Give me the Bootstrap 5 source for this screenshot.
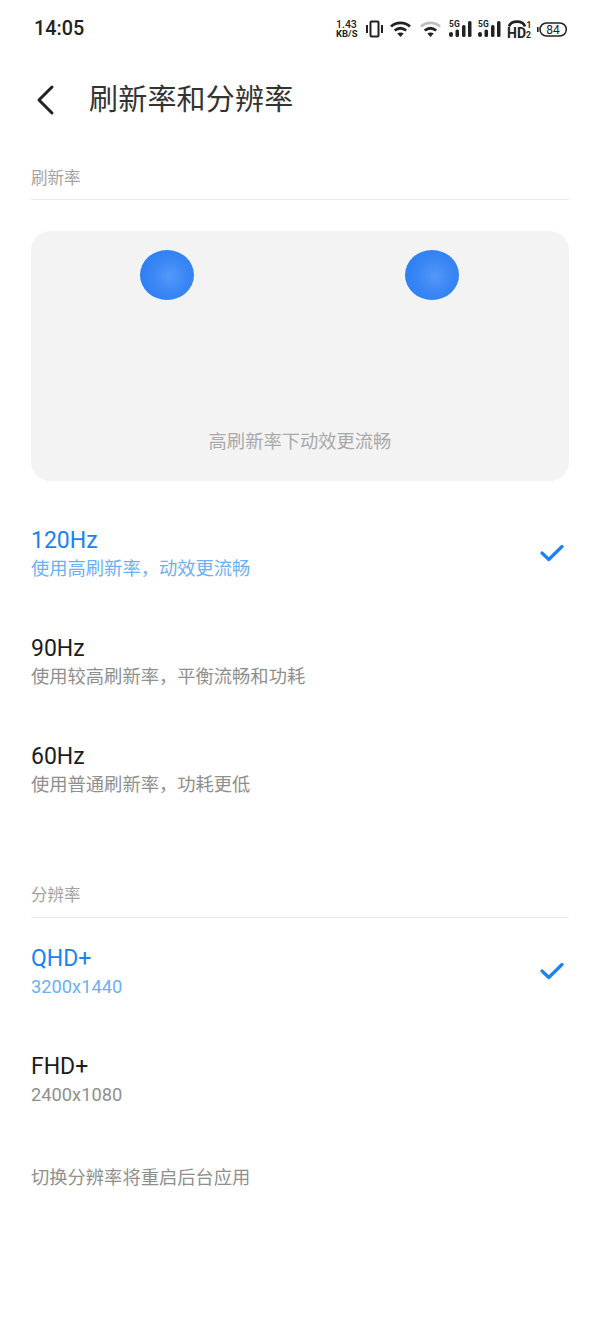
<!DOCTYPE html>
<html lang="zh">
<head>
    <meta charset="UTF-8">
    <title>刷新率和分辨率</title>
    <link href="https://cdn.jsdelivr.net/npm/bootstrap@5.3.0/dist/css/bootstrap.min.css" rel="stylesheet">
    <style>
        body {
            background-color: #fff;
            font-family: "Roboto", "Noto Sans CJK SC", sans-serif;
            color: #1c1c1c;
        }
        .status-row {
            height: 58px;
            padding: 0 33px 0 34px;
        }
        .status-time {
            font-size: 19.8px;
            font-weight: 500;
            color: #222;
        }
        .status-speed {
            width: 24px;
            color: #222;
            white-space: nowrap;
        }
        .speed-num {
            font-size: 10.5px;
            font-weight: 500;
            line-height: 9px;
        }
        .speed-unit {
            font-size: 9.5px;
            font-weight: 700;
            line-height: 9px;
        }
        .status-icons {
            gap: 6px;
        }
        .status-icons svg {
            overflow: visible;
        }
        .title-row {
            height: 84px;
            padding-left: 36px;
            margin-bottom: 24px;
        }
        .back-icon {
            width: 20px;
            height: 32px;
            margin-right: 33px;
        }
        .page-title {
            font-size: 29px;
            font-weight: 400;
            color: #333;
            margin: 0;
            letter-spacing: .2px;
            line-height: 42px;
        }
        .page-body {
            padding: 0 31px 0 31px;
        }
        .section-head {
            font-size: 16.5px;
            line-height: 24px;
            color: #a3a3a3;
            padding-top: 1px;
            padding-bottom: 8px;
            border-bottom: 1px solid #ececec;
        }
        .demo-box {
            height: 250px;
            margin-top: 31px;
            background-color: #f3f3f3;
            border-radius: 20px;
            padding-top: 19px;
        }
        .demo-balls {
            padding-left: 109px;
            gap: 211px;
        }
        .demo-ball {
            width: 54px;
            height: 50px;
            border-radius: 50%;
            background: radial-gradient(circle at 55% 52%, #5498f8 0%, #3a86f5 45%, #2a7ef3 82%, #4a92f5 93%, #86b6f7 100%);
        }
        .demo-text {
            font-size: 18.3px;
            line-height: 26px;
            color: #a9a9a9;
            margin-top: 129px;
            text-align: center;
        }
        .option-row {
            height: 108px;
            padding-top: 2px;
            padding-bottom: 0;
        }
        .option-name {
            font-size: 23px;
            line-height: 31px;
            color: #1c1c1c;
        }
        .option-desc {
            font-size: 18.3px;
            line-height: 25px;
            color: #8f8f8f;
        }
        .option-on .option-name {
            color: #1b82f2;
        }
        .option-on .option-desc {
            color: #6cb0f6;
        }
        .check-icon {
            width: 24px;
            height: 18px;
            margin-right: 5px;
            margin-bottom: 1px;
        }
        .first-list {
            margin-top: 17px;
        }
        .second-head {
            margin-top: 62px;
            padding-top: 0;
            padding-bottom: 9px;
        }
        .second-list {
            margin-top: -2px;
        }
        .res-note {
            font-size: 18.3px;
            line-height: 26px;
            color: #8f8f8f;
            margin-top: 33px;
        }
    </style>
</head>
<body>
    <div class="status-row d-flex align-items-center justify-content-between">
        <span class="status-time">14:05</span>
        <div class="status-icons d-flex align-items-center">
            <div class="status-speed">
                <div class="speed-num">1.43</div>
                <div class="speed-unit">KB/S</div>
            </div>
            <svg width="18" height="18" viewBox="0 0 18 18" fill="none" stroke="#222" stroke-width="2"><rect x="4.500" y="1.500" width="8" height="15" rx="1"/><path d="M1 5v8M16 5v8"/></svg>
            <svg width="24" height="16" viewBox="0 0 24 16" fill="none" stroke="#222" stroke-width="2.800"><path d="M1 5.500c5.500-4.800 13.500-4.800 19 0M4.700 9.500c3.500-2.800 8-2.800 11.500 0"/><path d="M10.500 16l-3.200-3.600c1.900-1.300 4.500-1.300 6.400 0z" fill="#222" stroke="none"/></svg>
            <svg width="23" height="16" viewBox="0 0 23 16" fill="none" stroke="#222" stroke-width="2.800"><path stroke="#bdbdbd" d="M1 5.500c5.500-4.800 13.500-4.800 19 0"/><path d="M4.700 9.500c3.500-2.800 8-2.800 11.500 0"/><path d="M10.500 16l-3.200-3.600c1.900-1.300 4.500-1.300 6.400 0z" fill="#222" stroke="none"/></svg>
            <svg width="23" height="18" viewBox="0 0 23 18" fill="#222"><text x="0" y="7" font-family="Roboto" font-size="8.500" font-weight="700">5G</text><rect x="0" y="12" width="4" height="5" rx="2"/><rect x="6.500" y="9.500" width="3.500" height="7.500" rx="1.500"/><rect x="13" y="5" width="3.500" height="12" rx="1.500"/><rect x="19" y="1" width="3.500" height="16" rx="1.500"/></svg>
            <svg width="23" height="18" viewBox="0 0 23 18" fill="#222"><text x="0" y="7" font-family="Roboto" font-size="8.500" font-weight="700">5G</text><rect x="0" y="12" width="4" height="5" rx="2"/><rect x="6.500" y="9.500" width="3.500" height="7.500" rx="1.500"/><rect x="13" y="5" width="3.500" height="12" rx="1.500"/><rect x="19" y="1" width="3.500" height="16" rx="1.500"/></svg>
            <svg width="24" height="18" viewBox="0 0 24 18" fill="#222"><path d="M2 6.500c2-6.500 14-6.500 16 0" fill="none" stroke="#222" stroke-width="2.600"/><text x="0" y="17.500" font-family="Roboto" font-size="14" font-weight="700">HD</text><text x="19.500" y="8" font-family="Roboto" font-size="8.500" font-weight="700">1</text><text x="19" y="17.500" font-family="Roboto" font-size="8.500" font-weight="700">2</text></svg>
            <svg width="30" height="15" viewBox="0 0 30 15"><path d="M.8 5v5" stroke="#222" stroke-width="1.600"/><rect x="3" y="1" width="26.300" height="13" rx="6.500" fill="#fff" stroke="#222" stroke-width="1.500"/><text x="16" y="11.700" text-anchor="middle" font-family="Roboto" font-size="12" fill="#222">84</text></svg>
        </div>
    </div>

    <div class="title-row d-flex align-items-center">
        <svg class="back-icon" viewBox="0 0 20 32" fill="none" stroke="#222" stroke-width="3" stroke-linecap="round" stroke-linejoin="round"><path d="M16 3L3 16l13 13"/></svg>
        <h1 class="page-title">刷新率和分辨率</h1>
    </div>

    <div class="page-body">
        <div class="section-head">刷新率</div>

        <div class="demo-box">
            <div class="demo-balls d-flex">
                <div class="demo-ball"></div>
                <div class="demo-ball"></div>
            </div>
            <div class="demo-text">高刷新率下动效更流畅</div>
        </div>

        <div class="first-list">
            <div class="option-row option-on d-flex align-items-center justify-content-between">
                <div>
                    <div class="option-name">120Hz</div>
                    <div class="option-desc">使用高刷新率，动效更流畅</div>
                </div>
                <svg class="check-icon" viewBox="0 0 24 18" fill="none" stroke="#1b82f2" stroke-width="3.200" stroke-linecap="round" stroke-linejoin="round"><path d="M2 9l6.800 6.500L22 2.500"/></svg>
            </div>
            <div class="option-row d-flex align-items-center">
                <div>
                    <div class="option-name">90Hz</div>
                    <div class="option-desc">使用较高刷新率，平衡流畅和功耗</div>
                </div>
            </div>
            <div class="option-row d-flex align-items-center">
                <div>
                    <div class="option-name">60Hz</div>
                    <div class="option-desc">使用普通刷新率，功耗更低</div>
                </div>
            </div>
        </div>

        <div class="section-head second-head">分辨率</div>

        <div class="second-list">
            <div class="option-row option-on d-flex align-items-center justify-content-between">
                <div>
                    <div class="option-name">QHD+</div>
                    <div class="option-desc">3200x1440</div>
                </div>
                <svg class="check-icon" viewBox="0 0 24 18" fill="none" stroke="#1b82f2" stroke-width="3.200" stroke-linecap="round" stroke-linejoin="round"><path d="M2 9l6.800 6.500L22 2.500"/></svg>
            </div>
            <div class="option-row d-flex align-items-center">
                <div>
                    <div class="option-name">FHD+</div>
                    <div class="option-desc">2400x1080</div>
                </div>
            </div>
        </div>

        <div class="res-note">切换分辨率将重启后台应用</div>
    </div>

    <script src="https://cdn.jsdelivr.net/npm/bootstrap@5.3.0/dist/js/bootstrap.bundle.min.js"></script>
</body>
</html>
